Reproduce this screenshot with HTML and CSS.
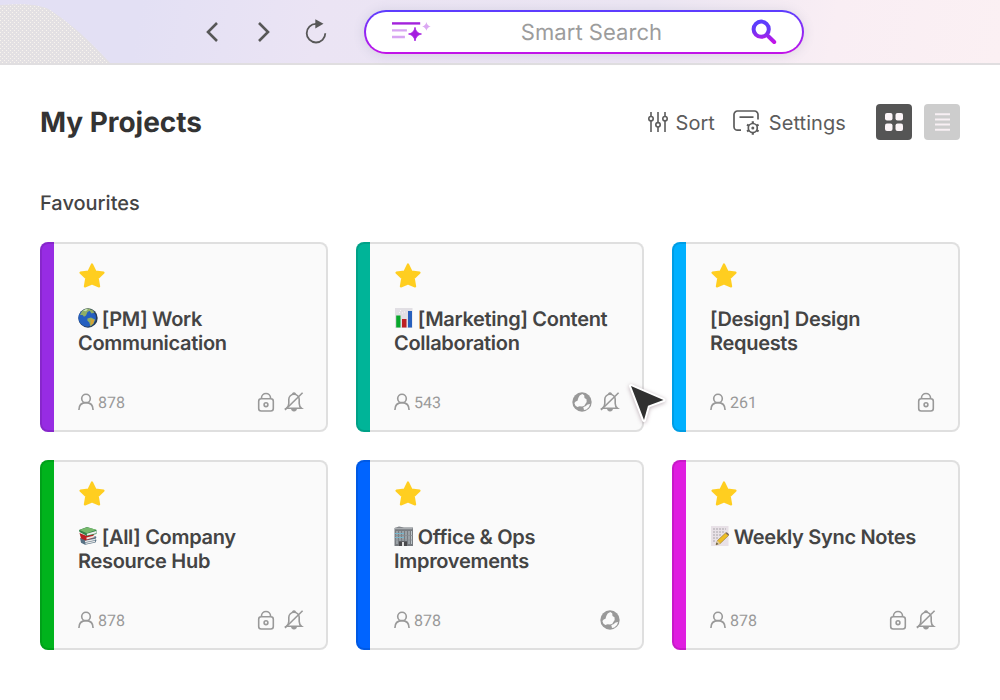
FILE: index.html
```html
<!DOCTYPE html>
<html lang="en">
<head>
<meta charset="utf-8">
<title>My Projects</title>
<link rel="stylesheet" href="styles.css">
</head>
<body>
<svg class="defs" aria-hidden="true">
  <defs>
    <linearGradient id="violet" x1="0" y1="0" x2="0" y2="1"><stop offset="0" stop-color="#5b3dff"/><stop offset=".4" stop-color="#6638f5"/><stop offset="1" stop-color="#c313e8"/></linearGradient>
    <pattern id="dots" width="4" height="4" patternUnits="userSpaceOnUse"><rect width="4" height="4" fill="#e3e0e3"/><rect width="1" height="1" fill="#f8f4ee"/><rect x="2" y="2" width="1" height="1" fill="#f8f4ee"/></pattern>
    <symbol id="star" viewBox="0 0 28 28"><path d="M14 2.500l3.400 7.100 8.100 1.100-5.800 5.600 1.400 8.100-7.100-2.900-7.100 2.900 1.400-8.100-5.800-5.600 8.100-1.100z" fill="#ffce20" stroke="#ffce20" stroke-width="2.200" stroke-linejoin="round"/></symbol>
    <symbol id="user" viewBox="0 0 16 18"><g fill="none" stroke="#999" stroke-width="1.600"><circle cx="8" cy="5.500" r="4.300"/><path d="M.9 17c0-4.600 2.500-7.400 7.100-7.400s7.100 2.800 7.100 7.400"/></g></symbol>
    <symbol id="lock" viewBox="0 0 20 20"><g fill="none" stroke="#999" stroke-width="1.600"><rect x="2.700" y="6.700" width="14.600" height="12.300" rx="2.500"/><path d="M5.500 6.500V5.800a4.500 4.300 0 0 1 9 0v.7"/><circle cx="10" cy="12.700" r="1.900"/></g></symbol>
    <symbol id="bell" viewBox="0 0 20 20"><path d="M7.300 16.500h5.400a2.700 2.700 0 0 1-5.400 0zM8.100 2.500a1.900 1.900 0 0 1 3.800 0z" fill="#999" stroke="#999" stroke-width=".6"/><g fill="none" stroke="#999" stroke-width="1.600"><path d="M2.300 16.300h15.300c-1.700-1.300-2.400-2.800-2.400-4.800V7.300A5.200 5 0 0 0 4.800 7.300v4.200c0 2-.8 3.500-2.500 4.800z"/><path d="M1 18L18.600.8"/></g></symbol>
    <symbol id="globe" viewBox="0 0 20 20"><circle cx="10" cy="10" r="9.700" fill="#999"/><path d="M7.700 3.500l2.600-1.500 1.900 1.300.3 2.600 2 1.300.2 2.800-1.200 1.700-1.200 2-2.200.8-2.500-.3-2.300.8-2-1.400L2.400 11l1.300-1.500 1.800-.7.800-2.700z" fill="#fafafa"/><path d="M11.300 14.900l2.200-.7 2.100-1.800 2.500-.3-1.100 2.900-2.600 2.400-2.400.7z" fill="#fafafa"/></symbol>
  </defs>
</svg>

<header class="topbar">
  <svg class="backdrop" width="112" height="63" viewBox="0 0 112 63"><path d="M0 5C28 3 45 5 53 12Q80 30 110 63H0Z" fill="url(#dots)"/></svg>
  <nav class="history">
    <svg width="16" height="24" viewBox="0 0 16 24"><path d="M13 3L4 12l9 9" class="chev"/></svg>
    <svg width="16" height="24" viewBox="0 0 16 24"><path d="M3 3l9 9-9 9" class="chev"/></svg>
    <svg width="24" height="26" viewBox="0 0 24 26"><path d="M13.500 5.900H12a9.300 9.300 0 1 0 9.300 9.400" fill="none" stroke="#575757" stroke-width="1.800"/><path d="M11.300 1.300l8.200 4.400-8.200 4.700z" fill="#575757"/></svg>
  </nav>
  <div class="search">
    <svg width="40" height="24" viewBox="0 0 40 24"><g stroke-width="2.400" stroke-linecap="square"><path d="M2.200 4.400H28" stroke="#a322dc"/><path d="M2.200 11.400h12.500M2.200 18h10.500" stroke="#d8a5f2"/></g><path d="M24 8.300q1 6 6.500 6.700Q25 16 24 22q-1-6-6.500-7 5.500-.7 6.500-6.700z" fill="#a51edf" stroke="#a51edf" stroke-width=".8"/><path d="M35.400 3q.8 3.800 4.300 4.400-3.500.6-4.300 4.400-.8-3.800-4.300-4.400 3.500-.6 4.300-4.400z" fill="#dba8f2"/></svg>
    <span class="placeholder">Smart Search</span>
    <svg width="26" height="26" viewBox="0 0 26 26"><g fill="none" stroke="url(#violet)" stroke-width="4" stroke-linecap="round"><path d="M17.800 10.200a7.600 7.600 0 1 1-15.200 0 7.600 7.600 0 0 1 15.200 0zM16 16l7.200 7"/></g></svg>
  </div>
</header>

<main>
  <div class="heading">
    <h1>My Projects</h1>
    <div class="tools">
      <button class="tool"><svg width="20" height="22" viewBox="0 0 20 22"><g fill="none" stroke="#5c5c5c" stroke-width="1.600"><path d="M3 1v4.500M3 10v11M10 1v10.500M10 16v5M17 1v4.500M17 10v11"/><circle cx="3" cy="7.700" r="2.200"/><circle cx="10" cy="13.800" r="2.200"/><circle cx="17" cy="7.700" r="2.200"/></g></svg><span>Sort</span></button>
      <button class="tool settings"><svg width="28" height="26" viewBox="0 0 28 26"><g fill="none" stroke="#5c5c5c" stroke-width="1.700"><path d="M8 21.200H4.500A3.500 3.500 0 0 1 1 17.700V5.500A3.500 3.500 0 0 1 4.500 2h17A3.500 3.500 0 0 1 25 5.500v5M6.500 8.200h14"/><circle cx="19.800" cy="19" r="4.500"/><path d="M19.800 14.500v-2.200M19.800 23.500v2.200M15.900 16.700L14 15.600M23.700 16.700l1.900-1.100M15.900 21.300L14 22.400M23.700 21.300l1.900 1.100" stroke-width="2.200"/></g><circle cx="19.800" cy="19" r="1.500" fill="#5c5c5c"/></svg><span>Settings</span></button>
      <button class="view dark"><svg width="36" height="36" viewBox="0 0 36 36" fill="#fcf5f8"><rect x="9" y="9" width="7.500" height="7.500" rx="2"/><rect x="19.500" y="9" width="7.500" height="7.500" rx="2"/><rect x="9" y="19.500" width="7.500" height="7.500" rx="2"/><rect x="19.500" y="19.500" width="7.500" height="7.500" rx="2"/></svg></button>
      <button class="view"><svg width="36" height="36" viewBox="0 0 36 36"><path d="M11 10.200h15M11 15.500h15M11 20.500h15M11 25.800h15" stroke="#f8f0f4" stroke-width="2"/></svg></button>
    </div>
  </div>
  <h2>Favourites</h2>
  <section class="grid">
    <article class="card purple">
      <svg class="star"><use href="#star"/></svg>
      <h3><svg class="emoji" viewBox="0 0 20 20"><circle cx="10" cy="10" r="9.700" fill="#263b57"/><circle cx="9.200" cy="9.900" r="8.800" fill="#245fc0"/><path d="M4 3l4-2.500 4.500.3-.7 2L9.500 4 8 7.500l-2 1.300L4.500 7 2 7zM11 2l3-.5 2.500 3-3 1-1-1.500zM9.500 10.500l3.500-1 4 2-1.500 4-3 3-1.200-4-2-2z" fill="#8fae65"/><path d="M12.500 11l4 1-1.300 3.600-2.500 2z" fill="#d4a334"/><path d="M5 2.800L8 1l2 .3-2 2z" fill="#c6dfb6"/></svg> [PM] Work<br>Communication</h3>
      <footer><svg class="user"><use href="#user"/></svg><span>878</span><div class="flags"><svg><use href="#lock"/></svg><svg><use href="#bell"/></svg></div></footer>
    </article>
    <article class="card teal">
      <svg class="star"><use href="#star"/></svg>
      <h3><svg class="emoji" viewBox="0 0 20 20"><path d="M1 0h17.500v20H1z" fill="#e1dfe4"/><path d="M5 4.500h.8M8 5h.8M10 4h.8M6 2.500h.8" stroke="#fff"/><path d="M2.200 7.500h4.300v12H2.200z" fill="#08a72c"/><path d="M8 11h4.500v8.500H8z" fill="#bd2023"/><path d="M14 3h4v16.500h-4z" fill="#2860bd"/></svg> [Marketing] Content<br>Collaboration</h3>
      <footer><svg class="user"><use href="#user"/></svg><span>543</span><div class="flags"><svg><use href="#globe"/></svg><svg><use href="#bell"/></svg></div></footer>
      <svg class="cursor" width="46" height="48" viewBox="0 0 46 48"><path d="M7 6l32.500 14-15.500 5.700L20 40z" fill="#303030" stroke="#fff" stroke-width="4" stroke-linejoin="round" paint-order="stroke"/></svg>
    </article>
    <article class="card sky">
      <svg class="star"><use href="#star"/></svg>
      <h3>[Design] Design<br>Requests</h3>
      <footer><svg class="user"><use href="#user"/></svg><span>261</span><div class="flags"><svg><use href="#lock"/></svg></div></footer>
    </article>
    <article class="card green">
      <svg class="star"><use href="#star"/></svg>
      <h3><svg class="emoji" viewBox="0 0 20 20"><path d="M2 12l5 1 10-3 1.500 1-1 2 1 1-1 2.500L7 18.700l-4-2z" fill="#577184"/><path d="M7 15.500l10.500-2.200M7.500 17.300l9.500-2" stroke="#e9e9e9" stroke-width="1.300"/><path d="M1.500 7l6 2.500L17 7l-1.500 2 .5 2.500-8.500 3L3 12.500z" fill="#ba1f21"/><path d="M8.500 11.500l8-2v1.800l-8 2.200z" fill="#eee6e2"/><path d="M1 4l8-3 9.500 3v4L9 10 1.500 6z" fill="#348148"/><path d="M1.500 4L9 1.300l9.500 2.500L9 7.200z" fill="#76b96c"/><path d="M8.800 7.800l9.400-2.900v2.300L9 9.500z" fill="#eee"/></svg> [All] Company<br>Resource Hub</h3>
      <footer><svg class="user"><use href="#user"/></svg><span>878</span><div class="flags"><svg><use href="#lock"/></svg><svg><use href="#bell"/></svg></div></footer>
    </article>
    <article class="card blue">
      <svg class="star"><use href="#star"/></svg>
      <h3><svg class="emoji" viewBox="0 0 20 20"><path d="M.5 2L5 .5l5 1h9V20H.5z" fill="#777b80"/><path d="M1 2.500h17.500" stroke="#a9adb0" stroke-width="1.500"/><path d="M3 5v13M6 5v10M9 5v10M12 5v10M15 5v13M17.500 5v13" stroke="#bfc8cc"/><path d="M1 7.500h9M1 11.500h9" stroke="#75b5cc"/><path d="M1 9.500h18M1 14h18" stroke="#858b90" stroke-width=".7"/><path d="M5 15.500h8V20H5z" fill="#49494b"/><path d="M8 16h2v4H8z" fill="#ddd"/></svg> Office &amp; Ops<br>Improvements</h3>
      <footer><svg class="user"><use href="#user"/></svg><span>878</span><div class="flags"><svg><use href="#globe"/></svg></div></footer>
    </article>
    <article class="card pink">
      <svg class="star"><use href="#star"/></svg>
      <h3><svg class="emoji" viewBox="0 0 20 20"><path d="M1 0h17.500v20H1z" fill="#e8e1e7"/><path d="M3 3h13M3 6h12M3 9h9M3 12h6M3 15h3" stroke="#aaa6ab" stroke-dasharray="2 1"/><path d="M6 18.800l1.500-4.300 8-7.500 3 2.500-8.300 8z" fill="#edbd25" stroke="#8f7430" stroke-width=".6"/><path d="M15.500 7l1.200-.7 2.300 2-.5 1.200z" fill="#77604e"/><path d="M6 18.800l1.500-4.300 2.800 3z" fill="#dcc79b"/><path d="M6 18.800l.7-2 1.400 1.300z" fill="#333"/></svg> Weekly Sync Notes</h3>
      <footer><svg class="user"><use href="#user"/></svg><span>878</span><div class="flags"><svg><use href="#lock"/></svg><svg><use href="#bell"/></svg></div></footer>
    </article>
  </section>
</main>
</body>
</html>
```
FILE: styles.css
```css
* { box-sizing: border-box; }
body { margin: 0; width: 1000px; height: 700px; overflow: hidden; background: #fff; font-family: Inter, sans-serif; color: #333; text-rendering: geometricPrecision; }
svg { display: block; flex: none; }
h1, h2, h3 { margin: 0; }
.defs { position: absolute; width: 0; height: 0; }

.topbar { position: relative; height: 65px; display: flex; align-items: flex-start; padding: 10px 0 0 204px; border-bottom: 2px solid #e0dee0; background: linear-gradient(100deg, #e3e0f4 0%, #e3e0f4 14%, #ebe4f4 32%, #ece6f3 65%, #f9eef4 83%, #fbf0f3 100%); }
.backdrop { position: absolute; left: 0; top: 0; }
.history { display: flex; align-items: center; gap: 36px; height: 44px; width: 160px; }
.history svg:last-child { margin-left: -4px; margin-top: -2px; }
.chev { fill: none; stroke: #575757; stroke-width: 2.6; }
.search { width: 440px; height: 44px; display: flex; align-items: center; padding: 0 26px 0 25px; border: 2px solid transparent; border-radius: 22px; background: linear-gradient(#fff, #fff) padding-box, linear-gradient(#5b3dff, #c313e8) border-box; box-shadow: 0 1px 12px rgba(90, 100, 130, .16); }
.search svg:first-child { margin-top: -2px; }
.search svg:last-child { margin-right: -1px; }
.placeholder { flex: 1; padding: 2px 0 0 1px; text-align: center; font-size: 22px; font-weight: 400; color: #9c9c9c; letter-spacing: .05px; }

main { padding: 39px 40px 0; }
.heading { display: flex; justify-content: space-between; align-items: center; height: 36px; }
h1 { font-size: 28px; font-weight: 700; line-height: 36px; letter-spacing: -.05px; }
.tools { display: flex; align-items: center; }
button { border: 0; padding: 0; margin: 0; background: none; font: inherit; color: #5c5c5c; }
.tool { display: flex; align-items: center; gap: 8px; font-size: 20px; line-height: 36px; }
.tool span { padding-top: 2px; }
.settings { margin-left: 18px; margin-right: 30px; letter-spacing: .08px; }
.view { width: 36px; height: 36px; border-radius: 4px; background: #cdcdcd; }
.dark { background: #555; margin-right: 12px; }
h2 { margin-top: 51px; font-size: 20px; line-height: 24px; font-weight: 500; color: #444; }
.grid { display: grid; grid-template-columns: repeat(3, 288px); gap: 28px; margin-top: 27px; }

.card { position: relative; height: 190px; display: flex; flex-direction: column; padding: 20px 24px 16px 38px; border-radius: 8px; background: linear-gradient(90deg, var(--accent) 14px, #fafafa 14px); box-shadow: inset 0 0 0 2px rgba(0, 0, 0, .105); }
.purple { --accent: #972ce3; }
.teal { --accent: #00b498; }
.sky { --accent: #00b0ff; }
.green { --accent: #00b31c; }
.blue { --accent: #0064ff; }
.pink { --accent: #df1de0; }
.star { width: 28px; height: 28px; }
h3 { margin-top: 17px; font-size: 20px; line-height: 24px; font-weight: 630; color: #444; letter-spacing: -.3px; white-space: nowrap; }
.emoji { display: inline-block; width: 20px; height: 20px; vertical-align: -2px; margin-right: -1px; }
.card footer { margin-top: auto; height: 28px; display: flex; align-items: center; color: #999; font-family: Roboto, sans-serif; font-size: 16px; }
.user { width: 16px; height: 18px; margin-right: 4px; }
.flags { display: flex; gap: 8px; margin-left: auto; }
.flags svg { width: 20px; height: 20px; }
.cursor { position: absolute; left: 268px; top: 138px; z-index: 2; filter: drop-shadow(0 1px 2px rgba(80, 40, 60, .35)); }
```
